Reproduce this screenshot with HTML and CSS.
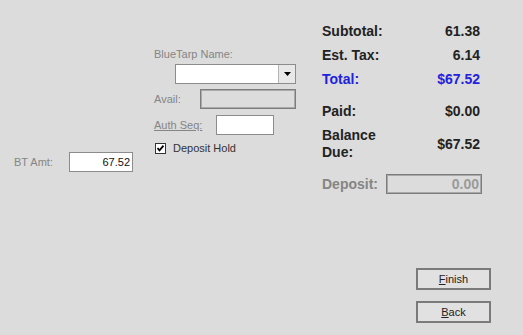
FILE: index.html
```html
<!DOCTYPE html>
<html lang="en">
<head>
<meta charset="UTF-8">
<meta name="viewport" content="width=device-width, initial-scale=1.0">
<title>Tender</title>
<link rel="stylesheet" href="styles.css">
</head>
<body>
<div class="form">
  <div class="col-left">
    <div class="field">
      <span class="lbl lbl-bt">BT Amt:</span>
      <div class="box box-bt">67.52</div>
    </div>
  </div>

  <div class="col-mid">
    <div class="lbl">BlueTarp Name:</div>
    <div class="combo">
      <div class="combo-text"></div>
      <div class="combo-btn">
        <svg width="7" height="4" viewBox="0 0 7 4"><path d="M0 0h7L3.5 4z" fill="#000"/></svg>
      </div>
    </div>
    <div class="field field-avail">
      <span class="lbl lbl-avail">Avail:</span>
      <div class="box box-off box-avail"></div>
    </div>
    <div class="field field-auth">
      <span class="lbl lbl-auth">Auth Seq:</span>
      <div class="box box-auth"></div>
    </div>
    <div class="check">
      <svg class="check-box" width="11" height="11" viewBox="0 0 11 11">
        <rect x="0.5" y="0.5" width="10" height="10" fill="#fff" stroke="#333"/>
        <path d="M2.5 5.2l2 2.1 4-4.6" fill="none" stroke="#000" stroke-width="1.8"/>
      </svg>
      <span>Deposit Hold</span>
    </div>
  </div>

  <div class="col-right">
    <div class="totals">
      <span>Subtotal:</span><span class="val">61.38</span>
      <span>Est. Tax:</span><span class="val">6.14</span>
      <span class="blue">Total:</span><span class="val blue">$67.52</span>
      <span class="gap">Paid:</span><span class="val gap">$0.00</span>
      <span>Balance<br>Due:</span><span class="val mid">$67.52</span>
    </div>
    <div class="deposit">
      <span class="dep-lbl">Deposit:</span>
      <div class="box box-off box-dep">0.00</div>
    </div>
    <div class="buttons">
      <button class="btn"><u>F</u>inish</button>
      <button class="btn"><u>B</u>ack</button>
    </div>
  </div>
</div>
</body>
</html>
```

FILE: styles.css
```css
body {
  margin: 0;
  background-color: #dcdcdc;
  font-family: "Liberation Sans", Arial, sans-serif;
  font-size: 11px;
  color: #222;
}
.form {
  display: flex;
  width: 523px;
  height: 335px;
  overflow: hidden;
}
.col-left {
  width: 140px;
  padding: 152px 0 0 14px;
}
.col-mid {
  width: 168px;
  padding-top: 48px;
}
.col-right {
  width: 169px;
  padding-top: 23px;
  display: flex;
  flex-direction: column;
}
.lbl {
  color: #858585;
  line-height: 13px;
}
.field {
  display: flex;
  align-items: center;
}
.box {
  box-sizing: border-box;
  height: 20px;
  background: #fff;
  border: 1px solid #8c8c8c;
  text-align: right;
  padding: 2px 2px 0 0;
  line-height: 15px;
}
.box-off {
  background: #dcdcdc;
  box-shadow: inset 0 0 0 1px #a9a9a9;
  border-color: #7c7c7c;
}
.lbl-bt {
  width: 55px;
}
.box-bt {
  width: 64px;
  color: #111;
}
.combo {
  display: flex;
  width: 121px;
  height: 20px;
  margin: 3px 0 0 21px;
  box-sizing: border-box;
  border: 1px solid #8c8c8c;
  background: #fff;
}
.combo-text {
  flex: 1;
}
.combo-btn {
  width: 16px;
  border-left: 1px solid #b4b4b4;
  background: #e8e8e8;
  display: flex;
  align-items: center;
  justify-content: center;
}
.field-avail {
  margin-top: 5px;
}
.lbl-avail {
  width: 46px;
}
.box-avail {
  width: 96px;
}
.field-auth {
  margin-top: 6px;
}
.lbl-auth {
  width: 62px;
  text-decoration: underline;
}
.box-auth {
  width: 58px;
}
.check {
  display: flex;
  align-items: center;
  margin: 7px 0 0 1px;
  color: #333;
  line-height: 13px;
}
.check-box {
  margin-right: 7px;
}
.totals {
  display: grid;
  grid-template-columns: 1fr auto;
  row-gap: 7px;
  width: 158px;
  font-size: 14px;
  font-weight: bold;
  line-height: 17px;
  color: #222;
}
.val {
  text-align: right;
}
.blue {
  color: #2222dd;
}
.gap {
  margin-top: 8px;
}
.mid {
  align-self: center;
}
.deposit {
  display: flex;
  align-items: center;
  margin-top: 13px;
  width: 160px;
}
.dep-lbl {
  width: 64px;
  font-size: 14px;
  font-weight: bold;
  color: #858585;
}
.box-dep {
  width: 96px;
  font-size: 14px;
  font-weight: bold;
  color: #9a9a9a;
  padding-top: 0;
  line-height: 18px;
}
.buttons {
  margin-top: auto;
  padding-bottom: 12px;
  display: flex;
  flex-direction: column;
  align-items: flex-end;
  gap: 11px;
}
.btn {
  width: 75px;
  height: 22px;
  box-sizing: border-box;
  border: 2px solid #7a7a7a;
  background: #e1e1e1;
  font-family: "Liberation Sans", Arial, sans-serif;
  font-size: 11px;
  color: #222;
  padding: 0;
}
```
